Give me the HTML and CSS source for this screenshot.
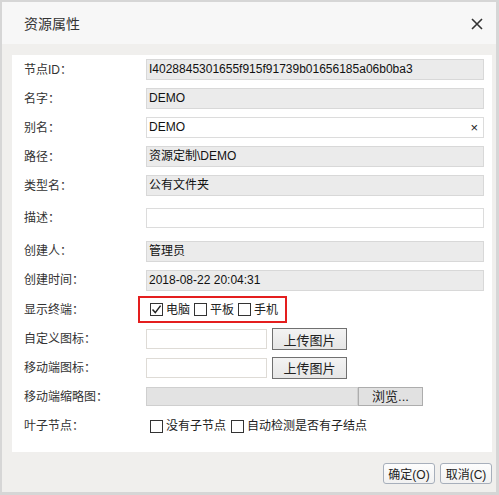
FILE: index.html
```html
<!DOCTYPE html>
<html lang="zh-CN">
<head>
  <meta charset="UTF-8">
  <title>资源属性</title>
  <link rel="stylesheet" href="styles.css">
</head>
<body>
  <div class="dialog">
    <div class="dialog-header">
      <span class="dialog-title">资源属性</span>
      <svg class="close" width="12" height="12" viewBox="0 0 12 12"><path d="M1 1L11 11M11 1L1 11" stroke="#333" stroke-width="1.6" fill="none"/></svg>
    </div>
    <div class="dialog-body">
      <div class="panel">
        <div class="form-grid">
          <label>节点ID：</label>
          <div class="field readonly">I4028845301655f915f91739b01656185a06b0ba3</div>

          <label>名字：</label>
          <div class="field readonly">DEMO</div>

          <label>别名：</label>
          <div class="field clearable">DEMO<span class="clear">×</span></div>

          <label>路径：</label>
          <div class="field readonly">资源定制\DEMO</div>

          <label>类型名：</label>
          <div class="field readonly">公有文件夹</div>

          <label>描述：</label>
          <div class="field desc"></div>

          <label>创建人：</label>
          <div class="field readonly">管理员</div>

          <label>创建时间：</label>
          <div class="field readonly">2018-08-22 20:04:31</div>

          <label>显示终端：</label>
          <div>
            <div class="terminal-box">
              <span class="check"><span class="cb checked"><svg width="11" height="11" viewBox="0 0 11 11"><path d="M1.5 5.5L4.3 8.6L9.6 1.6" stroke="#222" stroke-width="1.5" fill="none"/></svg></span>电脑</span>
              <span class="check"><span class="cb"></span>平板</span>
              <span class="check"><span class="cb"></span>手机</span>
            </div>
          </div>

          <label>自定义图标：</label>
          <div class="upload"><div class="field small"></div><button class="btn-upload">上传图片</button></div>

          <label>移动端图标：</label>
          <div class="upload"><div class="field small"></div><button class="btn-upload">上传图片</button></div>

          <label>移动端缩略图：</label>
          <div class="upload"><div class="field browse-field"></div><button class="btn-browse">浏览...</button></div>

          <label>叶子节点：</label>
          <div class="leaf">
            <span class="check"><span class="cb"></span>没有子节点</span>
            <span class="check"><span class="cb"></span>自动检测是否有子结点</span>
          </div>
        </div>
      </div>
    </div>
    <div class="dialog-footer">
      <button class="btn">确定(O)</button>
      <button class="btn">取消(C)</button>
    </div>
  </div>
</body>
</html>
```
FILE: styles.css
```css
body { margin: 0; background: #d6d6d6; font-family: "Liberation Sans", "Noto Sans CJK SC", sans-serif; font-size: 12px; color: #333; }
.dialog { margin: 2px; width: 494px; height: 490px; background: #f0efed; display: flex; flex-direction: column; }
.dialog-header { height: 42px; background: #f7f7f7; display: flex; align-items: center; justify-content: space-between; padding: 0 13px 0 22px; }
.dialog-title { font-size: 14px; color: #333; }
.close { margin-top: 1px; }

.dialog-body { padding: 11px 4px 0 10px; }
.panel { height: 397px; background: #fff; padding: 0 8px 0 12px; box-sizing: border-box; }

.form-grid {
  display: grid;
  grid-template-columns: 122px 1fr;
  grid-template-rows: 29px 29px 29px 29px 29px 36px 30px 28px 31px 28px 29px 29px 30px;
  align-items: center;
}
.form-grid label { color: #333; line-height: 16px; }

.field { height: 21px; box-sizing: border-box; border: 1px solid #dcdcdc; padding: 0 2px; line-height: 19px; color: #111; background: #fff; white-space: nowrap; overflow: hidden; }
.field.readonly { background: #ebebeb; border-color: #d8d8d8; }
.field.desc { height: 20px; }
.field.clearable { position: relative; }
.clear { position: absolute; right: 5px; top: 0; font-size: 13px; color: #222; }

.terminal-box { display: inline-flex; align-items: center; gap: 4px; margin-left: -8px; border: 2px solid #e41e1e; height: 27px; box-sizing: border-box; padding: 0 7px 0 10px; }
.check { display: inline-flex; align-items: center; gap: 3px; color: #222; line-height: 16px; }
.cb { width: 13px; height: 13px; box-sizing: border-box; border: 1px solid #333; background: #fff; display: inline-flex; align-items: center; justify-content: center; }
.leaf { display: flex; gap: 5px; padding-left: 4px; }

.upload { display: flex; align-items: center; }
.field.small { width: 121px; height: 20px; border-color: #dedbd6; }
.btn-upload { margin-left: 5px; width: 75px; height: 22px; border: 1px solid #707070; background: linear-gradient(#f3f3f3, #e6e6e6); font: inherit; font-size: 13px; color: #222; padding: 0; }
.field.browse-field { width: 212px; height: 19px; background: #e3e3e3; border-color: #cfcfcf; }
.btn-browse { width: 65px; height: 19px; border: 1px solid #adadad; background: #e1e1e1; font: inherit; font-size: 13px; color: #222; padding: 0; line-height: 16px; }

.dialog-footer { display: flex; justify-content: flex-end; gap: 5px; padding: 11px 4px 0 0; }
.btn { width: 52px; height: 21px; border: 1px solid #a7afbb; border-radius: 3px; background: linear-gradient(#fdfdfd, #f1f1f1); font: inherit; color: #222; padding: 0; }
```
